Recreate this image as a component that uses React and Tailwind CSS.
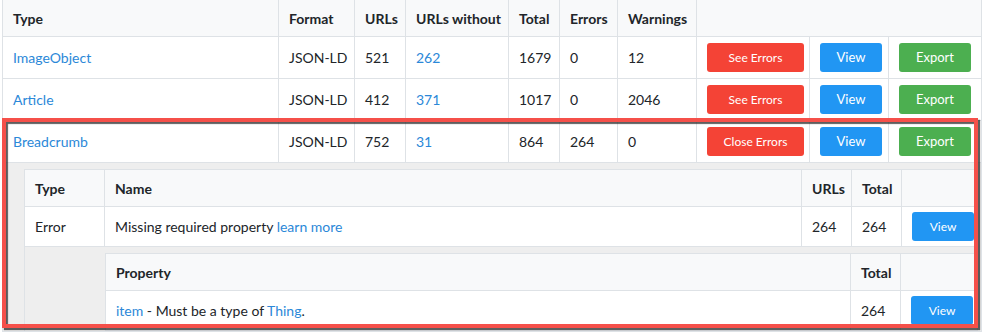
import React from 'react';

const rows = [
  { type: 'ImageObject', urls: 521, without: 262, total: 1679, errors: 0, warnings: 12, open: false },
  { type: 'Article', urls: 412, without: 371, total: 1017, errors: 0, warnings: 2046, open: false },
  { type: 'Breadcrumb', urls: 752, without: 31, total: 864, errors: 264, warnings: 0, open: true },
];

const th = 'whitespace-nowrap border border-[#dee2e6] bg-[#f8f9fa] px-[10px] text-left font-bold';
const td = 'whitespace-nowrap border border-[#dee2e6] px-[10px]';
const link = 'text-[#2b88d8]';

const Btn = ({ color, w, children, small }) => (
  <button
    className={`${color} ${w} ${small ? 'text-[12px]' : 'text-[13px]'} h-[29px] rounded-[3px] text-white`}
  >
    {children}
  </button>
);

const ErrorDetails = () => (
  <table className="w-[953px] table-fixed border-collapse bg-white">
    <colgroup>
      <col className="w-[80px]" />
      <col className="w-[697px]" />
      <col className="w-[50px]" />
      <col className="w-[50px]" />
      <col className="w-[76px]" />
    </colgroup>
    <thead>
      <tr className="h-[37px]">
        <th className={`${th} px-[9px]`}>Type</th>
        <th className={th}>Name</th>
        <th className={th}>URLs</th>
        <th className={th}>Total</th>
        <th className={th}></th>
      </tr>
    </thead>
    <tbody>
      <tr className="h-[40px]">
        <td className={`${td} px-[9px]`}>Error</td>
        <td className={td}>
          Missing required property <a className={link}>learn more</a>
        </td>
        <td className={td}>264</td>
        <td className={td}>264</td>
        <td className={`${td} px-[6px]`}>
          <Btn color="bg-[#2196f3]" w="w-[62px]" small>View</Btn>
        </td>
      </tr>
      <tr>
        <td colSpan={5} className="border-l border-[#dee2e6] bg-[#eeeeee] pt-[6px] pl-[80px]">
          <table className="w-[872px] table-fixed border-collapse bg-white">
            <colgroup>
              <col className="w-[745px]" />
              <col className="w-[50px]" />
              <col className="w-[77px]" />
            </colgroup>
            <thead>
              <tr className="h-[37px]">
                <th className={th}>Property</th>
                <th className={th}>Total</th>
                <th className={th}></th>
              </tr>
            </thead>
            <tbody>
              <tr className="h-[40px]">
                <td className={td}>
                  <a className={link}>item</a> - Must be a type of <a className={link}>Thing</a>.
                </td>
                <td className={td}>264</td>
                <td className={`${td} px-[6px]`}>
                  <Btn color="bg-[#2196f3]" w="w-[62px]" small>View</Btn>
                </td>
              </tr>
            </tbody>
          </table>
        </td>
      </tr>
    </tbody>
  </table>
);

export default function App() {
  return (
    <div className="relative h-[336px] w-[985px] overflow-hidden bg-white font-['Lato',sans-serif] text-[14px] text-[#212529]">
      <table className="ml-[2px] mt-[-1px] w-[979px] table-fixed border-collapse">
        <colgroup>
          <col className="w-[276px]" />
          <col className="w-[76px]" />
          <col className="w-[51px]" />
          <col className="w-[103px]" />
          <col className="w-[51px]" />
          <col className="w-[58px]" />
          <col className="w-[79px]" />
          <col className="w-[113px]" />
          <col className="w-[79px]" />
          <col className="w-[93px]" />
        </colgroup>
        <thead>
          <tr className="h-[37px]">
            <th className={th}>Type</th>
            <th className={th}>Format</th>
            <th className={th}>URLs</th>
            <th className={th}>URLs without</th>
            <th className={th}>Total</th>
            <th className={th}>Errors</th>
            <th className={th}>Warnings</th>
            <th className={th} colSpan={3}></th>
          </tr>
        </thead>
        <tbody>
          {rows.map((r) => (
            <React.Fragment key={r.type}>
              <tr className="h-[42px]">
                <td className={td}>
                  <a className={link}>{r.type}</a>
                </td>
                <td className={td}>JSON-LD</td>
                <td className={td}>{r.urls}</td>
                <td className={td}>
                  <a className={link}>{r.without}</a>
                </td>
                <td className={td}>{r.total}</td>
                <td className={td}>{r.errors}</td>
                <td className={td}>{r.warnings}</td>
                <td className={`${td} px-[6px]`}>
                  <Btn color="bg-[#f44336]" w="w-[97px]" small>
                    {r.open ? 'Close Errors' : 'See Errors'}
                  </Btn>
                </td>
                <td className={`${td} px-[6px]`}>
                  <Btn color="bg-[#2196f3]" w="w-[62px]">View</Btn>
                </td>
                <td className={`${td} px-[6px]`}>
                  <Btn color="bg-[#4caf50]" w="w-[72px]">Export</Btn>
                </td>
              </tr>
              {r.open && (
                <tr>
                  <td colSpan={10} className="border border-[#dee2e6] bg-[#eeeeee] pt-[6px] pl-[21px] align-top">
                    <ErrorDetails />
                  </td>
                </tr>
              )}
            </React.Fragment>
          ))}
        </tbody>
      </table>

      {/* highlight annotation */}
      <div className="absolute left-[2px] top-[118px] h-[210px] w-[976px] border-[4px] border-[#f5504a] shadow-[2px_2px_1px_rgba(40,40,40,0.75),inset_2px_2px_1px_rgba(40,40,40,0.75)]" />
    </div>
  );
}
